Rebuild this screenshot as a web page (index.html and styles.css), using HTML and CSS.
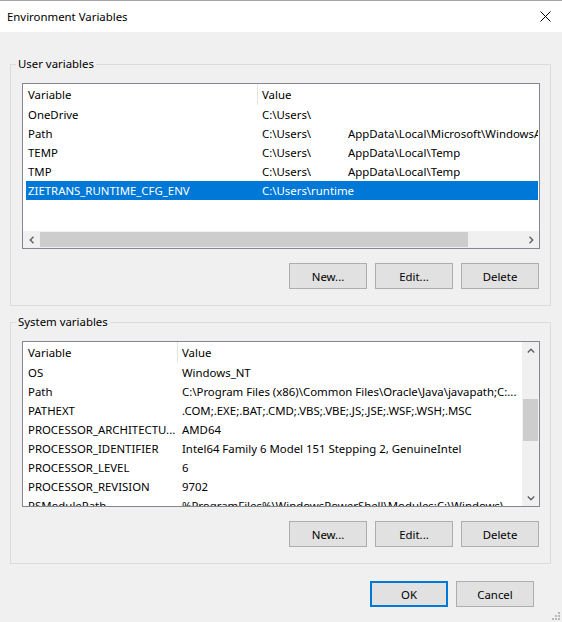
FILE: index.html
```html
<!DOCTYPE html>
<html>
<head>
<meta charset="utf-8">
<title>Environment Variables</title>
<link rel="stylesheet" href="styles.css">
</head>
<body>
<div class="window">
  <div class="titlebar">
    <span class="title">Environment Variables</span>
    <span class="close"><svg width="11" height="11" viewBox="0 0 11 11"><path d="M0.5 0.5L10.5 10.5M10.5 0.5L0.5 10.5" stroke="#000" stroke-width="1" fill="none"/></svg></span>
  </div>
  <div class="content">
    <fieldset class="group">
      <legend>User variables</legend>
      <div class="list list-user">
        <div class="list-main">
          <div class="list-head"><div class="hcell hvar">Variable</div><div class="hcell hval">Value</div></div>
          <div class="row"><div class="cell var">OneDrive</div><div class="cell val">C:\Users\</div></div>
          <div class="row"><div class="cell var">Path</div><div class="cell val"><span class="user-seg">C:\Users\</span>AppData\Local\Microsoft\WindowsApps;</div></div>
          <div class="row"><div class="cell var">TEMP</div><div class="cell val"><span class="user-seg">C:\Users\</span>AppData\Local\Temp</div></div>
          <div class="row"><div class="cell var">TMP</div><div class="cell val"><span class="user-seg">C:\Users\</span>AppData\Local\Temp</div></div>
          <div class="row selected"><div class="cell var">ZIETRANS_RUNTIME_CFG_ENV</div><div class="cell val">C:\Users\runtime</div></div>
        </div>
        <div class="hscroll">
          <div class="sb-btn"><svg width="8" height="8" viewBox="0 0 8 8"><polyline points="5.5,0.8 2.3,4 5.5,7.2" fill="none" stroke="#606060" stroke-width="1.4"/></svg></div>
          <div class="track"><div class="thumb"></div></div>
          <div class="sb-btn"><svg width="8" height="8" viewBox="0 0 8 8"><polyline points="2.5,0.8 5.7,4 2.5,7.2" fill="none" stroke="#606060" stroke-width="1.4"/></svg></div>
        </div>
      </div>
      <div class="btn-row">
        <button class="btn">New...</button>
        <button class="btn">Edit...</button>
        <button class="btn">Delete</button>
      </div>
    </fieldset>

    <fieldset class="group group-sys">
      <legend>System variables</legend>
      <div class="list list-sys">
        <div class="list-main">
          <div class="list-head"><div class="hcell hvar">Variable</div><div class="hcell hval">Value</div></div>
          <div class="row"><div class="cell var">OS</div><div class="cell val">Windows_NT</div></div>
          <div class="row"><div class="cell var">Path</div><div class="cell val">C:\Program Files (x86)\Common Files\Oracle\Java\javapath;C:...</div></div>
          <div class="row"><div class="cell var">PATHEXT</div><div class="cell val">.COM;.EXE;.BAT;.CMD;.VBS;.VBE;.JS;.JSE;.WSF;.WSH;.MSC</div></div>
          <div class="row"><div class="cell var">PROCESSOR_ARCHITECTU...</div><div class="cell val">AMD64</div></div>
          <div class="row"><div class="cell var">PROCESSOR_IDENTIFIER</div><div class="cell val">Intel64 Family 6 Model 151 Stepping 2, GenuineIntel</div></div>
          <div class="row"><div class="cell var">PROCESSOR_LEVEL</div><div class="cell val">6</div></div>
          <div class="row"><div class="cell var">PROCESSOR_REVISION</div><div class="cell val">9702</div></div>
          <div class="row"><div class="cell var">PSModulePath</div><div class="cell val">%ProgramFiles%\WindowsPowerShell\Modules;C:\Windows\...</div></div>
        </div>
        <div class="vscroll">
          <div class="sb-btn"><svg width="8" height="8" viewBox="0 0 8 8"><polyline points="0.8,5.5 4,2.3 7.2,5.5" fill="none" stroke="#606060" stroke-width="1.4"/></svg></div>
          <div class="track"><div class="thumb"></div></div>
          <div class="sb-btn"><svg width="8" height="8" viewBox="0 0 8 8"><polyline points="0.8,2.5 4,5.7 7.2,2.5" fill="none" stroke="#606060" stroke-width="1.4"/></svg></div>
        </div>
      </div>
      <div class="btn-row">
        <button class="btn">New...</button>
        <button class="btn">Edit...</button>
        <button class="btn">Delete</button>
      </div>
    </fieldset>

    <div class="btn-row dialog-buttons">
      <button class="btn btn-primary">OK</button>
      <button class="btn">Cancel</button>
    </div>
  </div>
  <svg class="grip" width="8" height="8" viewBox="0 0 8 8">
    <rect x="6" y="0" width="2" height="2" fill="#b8b8b8"/>
    <rect x="3" y="3" width="2" height="2" fill="#b8b8b8"/>
    <rect x="6" y="3" width="2" height="2" fill="#b8b8b8"/>
    <rect x="0" y="6" width="2" height="2" fill="#b8b8b8"/>
    <rect x="3" y="6" width="2" height="2" fill="#b8b8b8"/>
    <rect x="6" y="6" width="2" height="2" fill="#b8b8b8"/>
  </svg>
</div>
</body>
</html>
```
FILE: styles.css
```css
* { box-sizing: border-box; }

body {
  margin: 0;
  font-family: "Noto Sans", "Segoe UI", sans-serif;
  font-size: 11.4px;
  color: #000;
}

.window {
  width: 562px;
  height: 622px;
  background: #f0f0f0;
  border-top: 1px solid #a5a5a5;
  position: relative;
  overflow: hidden;
}

.titlebar {
  height: 31px;
  background: #fff;
  display: flex;
  align-items: center;
  justify-content: space-between;
  padding-left: 7px;
}

.close {
  width: 33px;
  height: 31px;
  display: flex;
  align-items: center;
  justify-content: center;
}

.content {
  padding: 0 11px 0 10px;
}

.group {
  margin: 24px 0 0;
  padding: 11px 10px 16px 11px;
  border: 1px solid #dcdcdc;
  min-width: 0;
}

.group-sys {
  margin-top: 8px;
}

.group legend {
  margin-left: -6px;
  padding: 0 2px;
  line-height: 16px;
}

.list {
  height: 166px;
  border: 1px solid #828790;
  background: #fff;
  display: flex;
  overflow: hidden;
}

.list-user { flex-direction: column; }

.list-main {
  flex: 1;
  min-width: 0;
  min-height: 0;
  overflow: hidden;
}

.list-head {
  display: flex;
  height: 21px;
}

.hcell {
  display: flex;
  align-items: center;
  white-space: nowrap;
}

.hvar {
  flex: none;
  padding-left: 5px;
  border-right: 1px solid #e5e5e5;
}

.hval {
  flex: 1;
  padding-left: 4px;
}

.row {
  display: flex;
  align-items: center;
  height: 19px;
  margin: 0 1px 0 3px;
  white-space: nowrap;
  overflow: hidden;
}

.row.selected {
  background: #0078d7;
  color: #fff;
}

.cell.var {
  flex: none;
  padding-left: 2px;
  overflow: hidden;
}

.cell.val {
  padding-left: 4px;
}

.list-user .hvar { width: 235px; }
.list-user .cell.var { width: 232px; }
.list-sys .hvar { width: 155px; }
.list-sys .cell.var { width: 152px; }

.user-seg {
  display: inline-block;
  width: 86px;
}

.hscroll {
  height: 17px;
  flex: none;
  display: flex;
  background: #f0f0f0;
}

.sb-btn {
  width: 17px;
  height: 17px;
  flex: none;
  display: flex;
  align-items: center;
  justify-content: center;
}

.hscroll .track {
  flex: 1;
  display: flex;
}

.hscroll .thumb {
  width: 428px;
  margin: 1px 0;
  background: #cdcdcd;
}

.vscroll {
  width: 17px;
  flex: none;
  display: flex;
  flex-direction: column;
  background: #f0f0f0;
}

.vscroll .track { flex: 1; }

.vscroll .thumb {
  height: 42px;
  margin: 40px 1px 0;
  background: #cdcdcd;
}

.btn-row {
  display: flex;
  justify-content: flex-end;
  gap: 8px;
  margin-top: 14px;
  padding-right: 1px;
}

.btn {
  width: 78px;
  height: 26px;
  padding: 0;
  background: #e1e1e1;
  border: 1px solid #adadad;
  font: inherit;
  color: #000;
}

.btn-primary {
  border: 2px solid #0078d7;
}

.dialog-buttons {
  margin-top: 17px;
  padding-right: 17px;
}

.grip {
  position: absolute;
  right: 2px;
  bottom: 2px;
}
```
